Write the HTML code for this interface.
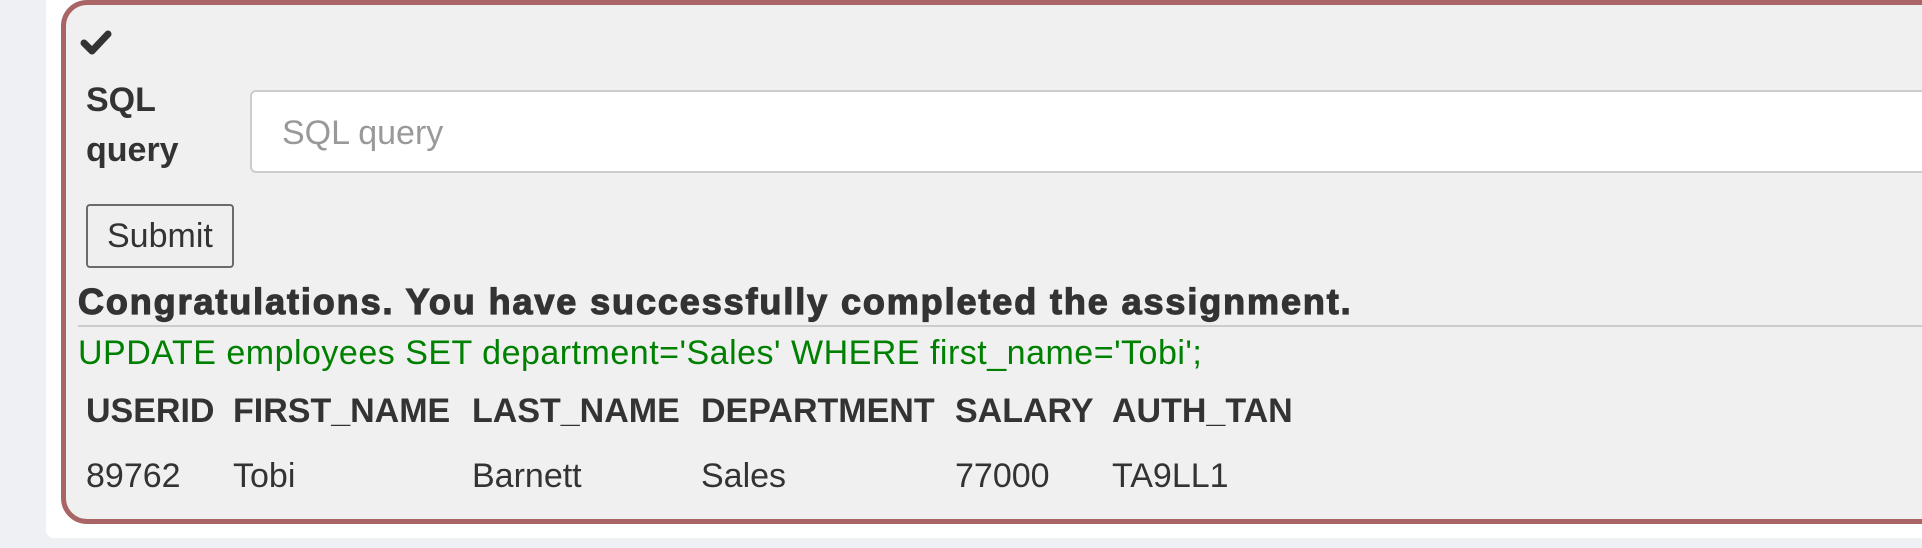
<!DOCTYPE html>
<html><head><meta charset="utf-8"><style>
html,body{margin:0;padding:0;width:1922px;height:548px;overflow:hidden;background:#eff0f4;font-family:"Liberation Sans",Arial,sans-serif;color:#333}
.panel{position:absolute;left:46px;top:-20px;width:1900px;height:558px;background:#fff;border-radius:8px}
.frame{position:absolute;left:61px;top:0;width:1900px;height:514px;border:5px solid #a96565;border-radius:26px;background:#f0f0f0}
.t{position:absolute;white-space:nowrap;font-size:34px;line-height:1}
.b{font-weight:bold}
.input{position:absolute;left:250px;top:90px;width:1700px;height:79px;border:2px solid #ccc;border-radius:6px;background:#fff}
.btn{position:absolute;left:86px;top:204px;width:144px;height:60px;border:2px solid #6b6b6b;border-radius:4px;background:#efefef}
.hr{position:absolute;left:78px;top:325px;width:1900px;height:2px;background:#ccc}
</style></head><body>
<div class="panel"></div>
<div class="frame"></div>
<svg style="position:absolute;left:80px;top:30px" width="32" height="26" viewBox="0 0 32 26"><path d="M4 13 L12 21 L28 4" fill="none" stroke="#333" stroke-width="7" stroke-linecap="round" stroke-linejoin="round"/></svg>
<div class="t b" style="left:86px;top:83px">SQL</div>
<div class="t b" style="left:86px;top:133px">query</div>
<div class="input"></div>
<div class="t" style="left:282px;top:116px;color:#999">SQL query</div>
<div class="btn"></div>
<div class="t" style="left:107px;top:219px">Submit</div>
<div class="t b" style="left:78px;top:284px;font-size:36px;letter-spacing:1.9px;-webkit-text-stroke:1.2px #333">Congratulations. You have successfully completed the assignment.</div>
<div class="hr"></div>
<div class="t" style="left:78px;top:336px;color:#008000;letter-spacing:0.5px">UPDATE employees SET department='Sales' WHERE first_name='Tobi';</div>
<div class="t b" style="left:86px;top:394px">USERID</div>
<div class="t b" style="left:233px;top:394px">FIRST_NAME</div>
<div class="t b" style="left:472px;top:394px">LAST_NAME</div>
<div class="t b" style="left:701px;top:394px">DEPARTMENT</div>
<div class="t b" style="left:955px;top:394px">SALARY</div>
<div class="t b" style="left:1112px;top:394px">AUTH_TAN</div>
<div class="t" style="left:86px;top:459px">89762</div>
<div class="t" style="left:233px;top:459px">Tobi</div>
<div class="t" style="left:472px;top:459px">Barnett</div>
<div class="t" style="left:701px;top:459px">Sales</div>
<div class="t" style="left:955px;top:459px">77000</div>
<div class="t" style="left:1112px;top:459px">TA9LL1</div>
</body></html>
